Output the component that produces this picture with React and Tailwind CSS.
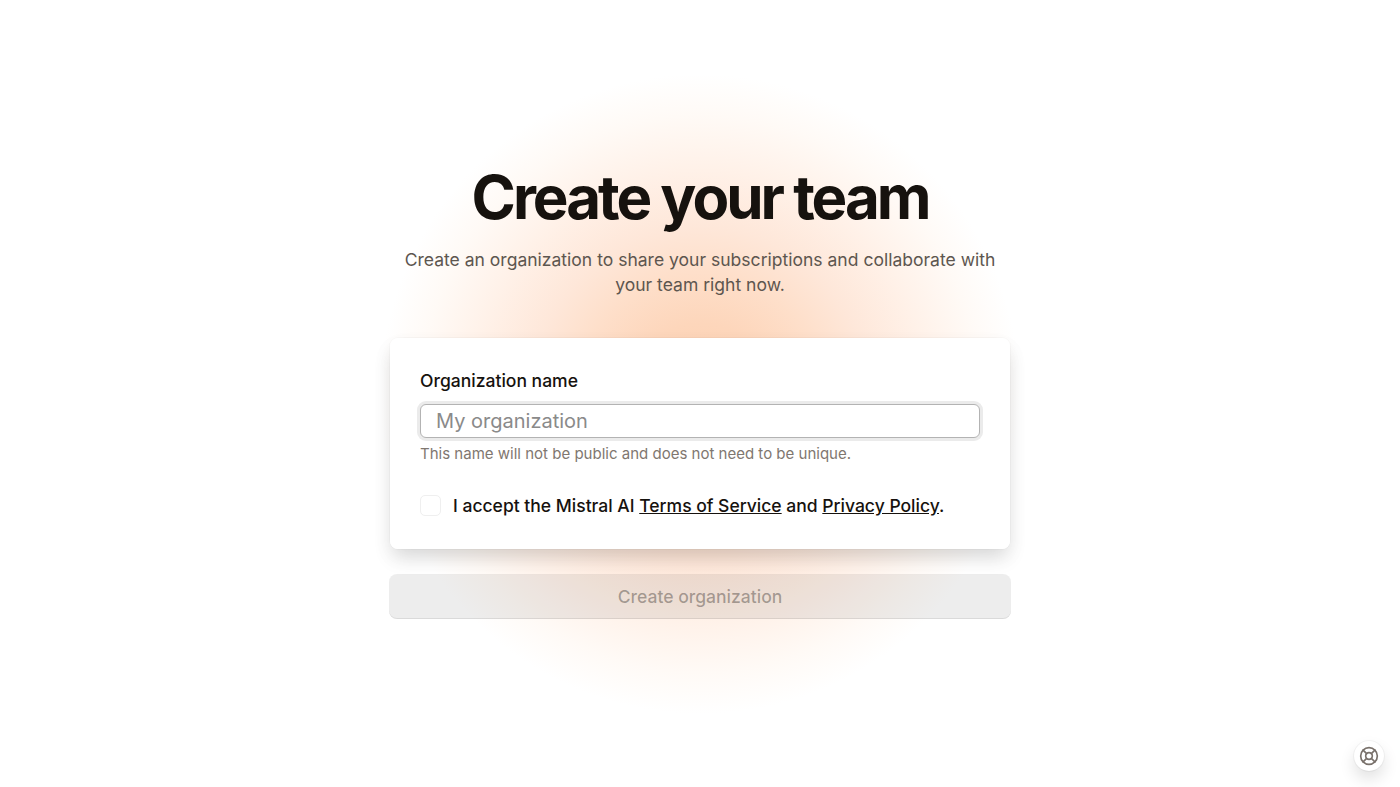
import React, { useState } from "react";
import { LifeBuoy } from "lucide-react";

function App() {
  const [name, setName] = useState("");
  const [accepted, setAccepted] = useState(false);

  return (
    <div className="relative flex h-screen items-center justify-center overflow-hidden bg-white font-['Inter',sans-serif] text-[#16120e]">
      {/* Glow */}
      <div className="pointer-events-none absolute top-1/2 left-1/2 size-[640px] -translate-x-1/2 -translate-y-1/2 rounded-full bg-[radial-gradient(circle_closest-side,#fccfb0_0%,#fdd6bb_22%,#fedfca_38%,#fee7d9_52%,#fff1e8_70%,#fffaf6_87%,#ffffff_100%)]" />

      <main className="relative flex w-[622px] flex-col">
        <h1 className="text-center text-[60px] leading-[58px] font-bold tracking-[-3px]">
          Create your team
        </h1>
        <p className="mt-[21px] px-3 text-center text-[17.55px] leading-[25px] text-[#5d564f]">
          Create an organization to share your subscriptions and collaborate with your team right now.
        </p>

        {/* Card */}
        <div className="mt-[40px] flex h-[213px] flex-col rounded-[9px] border border-black/2 bg-white bg-clip-padding px-[30px] pt-[30px] shadow-[0_11px_20px_-4px_rgba(0,0,0,0.13),0_8px_20px_rgba(0,0,0,0.04)]">
          <label htmlFor="name" className="text-[17.55px] leading-[25px] font-medium">
            Organization name
          </label>
          <input
            id="name"
            type="text"
            placeholder="My organization"
            className="mt-[11px] h-[34px] rounded-md border border-[#b3b3b3] bg-white px-[15px] text-[20px] ring-3 ring-[#ebebeb] outline-none placeholder:text-[#8a8a8a]"
            value={name}
            onChange={(e) => setName(e.target.value)}
          />
          <p className="mt-[5px] text-[15.03px] leading-[21px] text-[#7f7770]">
            This name will not be public and does not need to be unique.
          </p>
          <div className="mt-[29px] flex items-center gap-[12px]">
            <button
              aria-label="Accept"
              className="size-[21px] rounded-[5px] border border-[#efefef] bg-white"
              onClick={() => setAccepted(!accepted)}
            />
            <span className="text-[17.53px] leading-[25px] font-medium">
              I accept the Mistral AI <a className="underline">Terms of Service</a> and{" "}
              <a className="underline">Privacy Policy</a>.
            </span>
          </div>
        </div>

        <button
          className="mt-[24px] h-[45px] rounded-lg bg-black/7 pt-0.5 text-[17.55px] font-medium text-[#16120e]/35 shadow-[inset_0_-1px_0_rgba(0,0,0,0.08)]"
          disabled={!name || !accepted}
        >
          Create organization
        </button>
      </main>

      {/* Help */}
      <button className="absolute right-4 bottom-4 flex size-[30px] items-center justify-center rounded-full bg-white text-[#79716b] shadow-[0_0_0_1px_rgba(0,0,0,0.04),0_8px_16px_rgba(0,0,0,0.12)]">
        <LifeBuoy size={20} strokeWidth={2} />
      </button>
    </div>
  );
}

export default App;
